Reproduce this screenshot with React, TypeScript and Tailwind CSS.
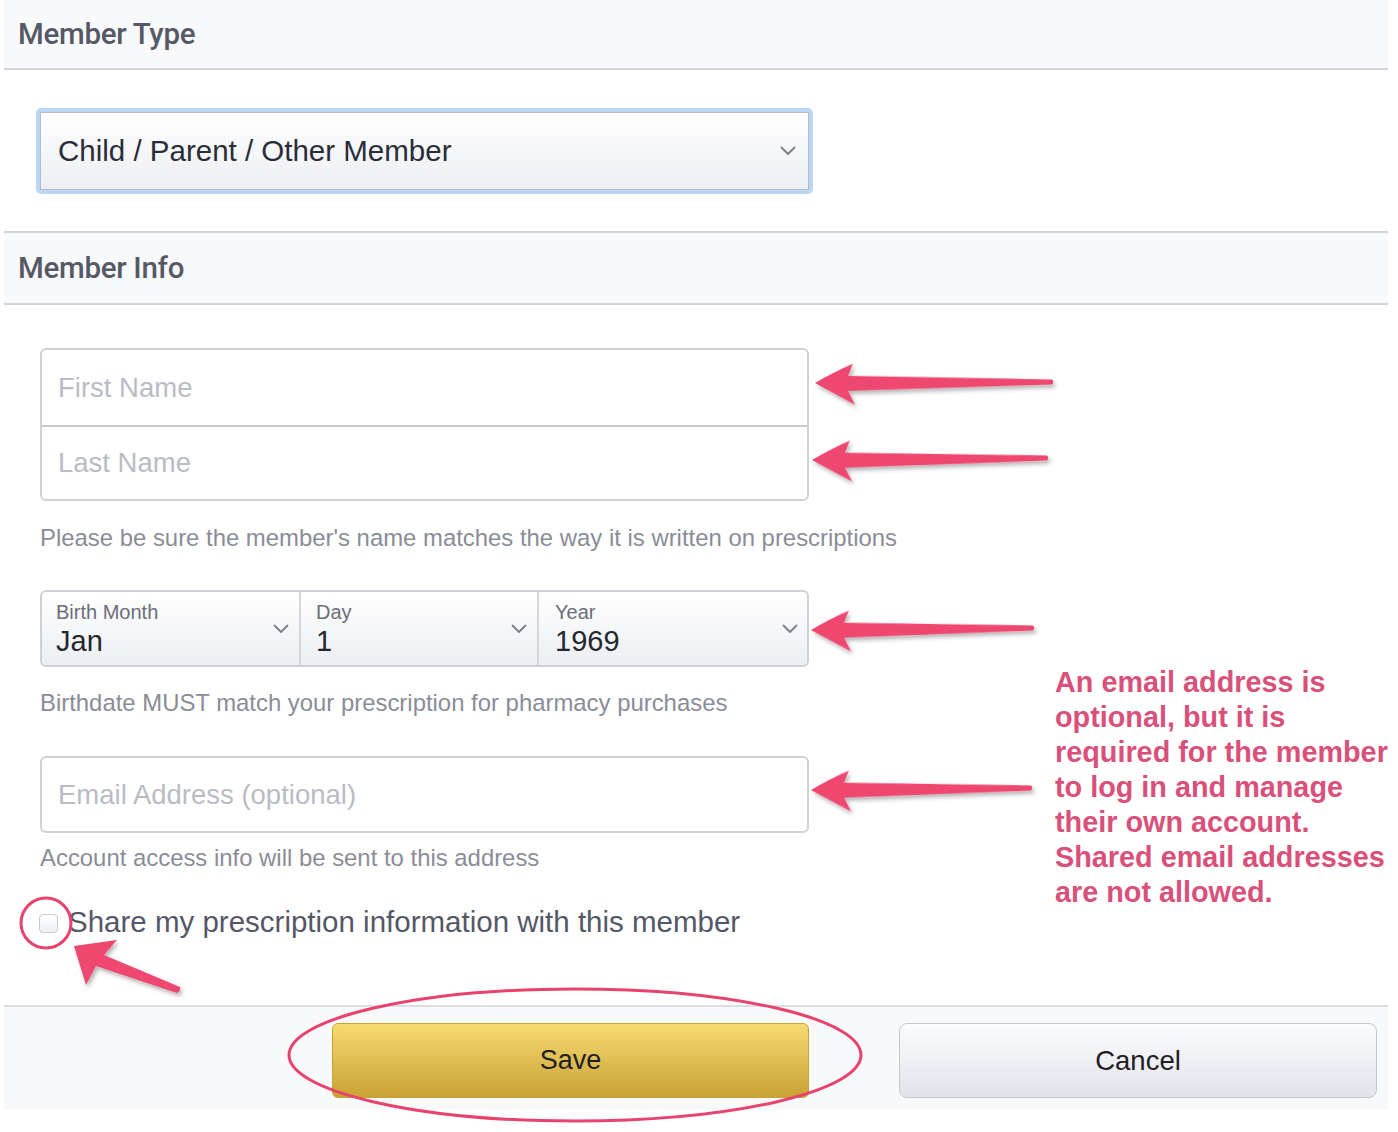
import React from "react";

function Chevron({ className = "" }: { className?: string }) {
  return (
    <svg className={className} width="16" height="10" viewBox="0 0 16 10" fill="none">
      <polyline points="1.5,1.5 8,8 14.5,1.5" stroke="#7a7e89" strokeWidth="1.8" strokeLinecap="round" strokeLinejoin="round" />
    </svg>
  );
}

function Arrow({ tx, ty, ex, ey, s = 1 }: { tx: number; ty: number; ex: number; ey: number; s?: number }) {
  const dx = ex - tx;
  const dy = ey - ty;
  const L = Math.hypot(dx, dy);
  const ang = (Math.atan2(dy, dx) * 180) / Math.PI;
  const d = `M0,0 C${12 * s},${-7 * s} ${26 * s},${-14 * s} ${38 * s},${-19 * s} L${33 * s},${-7 * s} L${L},-2.6 Q${L + 2.6},0 ${L},2.6 L${33 * s},${8 * s} L${40 * s},${22 * s} C${27 * s},${15 * s} ${13 * s},${7 * s} 0,0 Z`;
  return <path d={d} transform={`translate(${tx},${ty}) rotate(${ang})`} fill="#ee4770" filter="url(#ashadow)" />;
}

function HelpText({ children, className = "" }: { children: React.ReactNode; className?: string }) {
  return <div className={`ml-[36px] text-[23.9px] leading-[30px] text-[#8a8d98] ${className}`}>{children}</div>;
}

export default function App() {
  return (
    <div className="relative w-[1398px] h-[1132px] bg-white overflow-hidden font-['Liberation_Sans',Arial,sans-serif]">
      <div className="ml-[4px] w-[1384px]">
        {/* Member Type header */}
        <div className="h-[70px] bg-[#f8f9fb] border-b-2 border-[#d2d4d9] flex items-center pl-[14px]">
          <span className="font-['Roboto',sans-serif] font-medium text-[29.5px] text-[#555965] tracking-[-0.3px]">Member Type</span>
        </div>

        {/* Select */}
        <div className="pt-[38px] pb-[37px] pl-[32px]">
          <div className="w-[777px] rounded-[5px] bg-[#bcd6f6] p-[4px]">
            <div className="h-[78px] border border-[#b8bac1] bg-gradient-to-b from-white to-[#eceef2] flex items-center justify-between pl-[17px] pr-[12px]">
              <span className="text-[29.5px] text-[#2a2d38]">Child / Parent / Other Member</span>
              <Chevron />
            </div>
          </div>
        </div>

        {/* Member Info header */}
        <div className="h-[74px] bg-[#f8f9fb] border-y-2 border-[#d2d4d9] flex items-center pl-[14px]">
          <span className="font-['Roboto',sans-serif] font-medium text-[29.5px] text-[#555965] tracking-[-0.3px]">Member Info</span>
        </div>

        {/* Name inputs */}
        <div className="mt-[43px] ml-[36px] w-[769px] rounded-[6px] border-2 border-[#cfd1d6] bg-white">
          <div className="h-[77px] border-b-2 border-[#c6c8cd] flex items-center pl-[16px]">
            <span className="text-[27.5px] text-[#b9bcc5]">First Name</span>
          </div>
          <div className="h-[72px] flex items-center pl-[16px]">
            <span className="text-[27.5px] text-[#b9bcc5]">Last Name</span>
          </div>
        </div>
        <HelpText className="mt-[22px]">Please be sure the member's name matches the way it is written on prescriptions</HelpText>

        {/* Birthdate */}
        <div className="mt-[37px] ml-[36px] w-[769px] h-[77px] rounded-[6px] border-2 border-[#cfd1d6] bg-gradient-to-b from-white to-[#eceef2] flex">
          <div className="w-[259px] border-r-2 border-[#d4d6db] flex items-center justify-between pl-[14px] pr-[10px]">
            <div className="flex flex-col pt-[2px]">
              <span className="text-[20px] leading-[22px] text-[#6a6e79]">Birth Month</span>
              <span className="text-[29px] leading-[36px] text-[#24272f]">Jan</span>
            </div>
            <Chevron />
          </div>
          <div className="w-[238px] border-r-2 border-[#d4d6db] flex items-center justify-between pl-[15px] pr-[10px]">
            <div className="flex flex-col pt-[2px]">
              <span className="text-[20px] leading-[22px] text-[#6a6e79]">Day</span>
              <span className="text-[29px] leading-[36px] text-[#24272f]">1</span>
            </div>
            <Chevron />
          </div>
          <div className="flex-1 flex items-center justify-between pl-[16px] pr-[9px]">
            <div className="flex flex-col pt-[2px]">
              <span className="text-[20px] leading-[22px] text-[#6a6e79]">Year</span>
              <span className="text-[29px] leading-[36px] text-[#24272f]">1969</span>
            </div>
            <Chevron />
          </div>
        </div>
        <HelpText className="mt-[21px]">Birthdate MUST match your prescription for pharmacy purchases</HelpText>

        {/* Email */}
        <div className="mt-[38px] ml-[36px] w-[769px] h-[77px] rounded-[6px] border-2 border-[#cfd1d6] bg-white flex items-center pl-[16px]">
          <span className="text-[27.5px] text-[#b9bcc5]">Email Address (optional)</span>
        </div>
        <HelpText className="mt-[10px]">Account access info will be sent to this address</HelpText>

        {/* Checkbox */}
        <div className="mt-[31px] ml-[35px] h-[36px] flex items-center">
          <div className="w-[19px] h-[19px] rounded-[4px] border-[1.5px] border-[#c9cbd1] bg-gradient-to-b from-white to-[#eef0f3] mt-[2px]" />
          <span className="ml-[10px] text-[29.5px] text-[#545866]">Share my prescription information with this member</span>
        </div>

        {/* Footer */}
        <div className="mt-[65px] h-[105px] bg-[#f8f9fb] border-t-2 border-[#dcdee2] flex justify-end items-start pt-[16px] pr-[11px] gap-[90px]">
          <button className="w-[477px] h-[75px] rounded-[6px] border border-[#c4a33a] bg-gradient-to-b from-[#f7da72] to-[#c9a232] flex items-center justify-center text-[27px] text-[#1f2024]">
            Save
          </button>
          <button className="w-[478px] h-[75px] rounded-[8px] border-[1.5px] border-[#c5c7ce] bg-gradient-to-b from-[#fbfcfe] to-[#e2e4eb] flex items-center justify-center text-[27.5px] text-[#1f2024]">
            Cancel
          </button>
        </div>
      </div>

      {/* Annotation text */}
      <div className="absolute left-[1055px] top-[665px] whitespace-nowrap font-bold text-[28.8px] leading-[35px] text-[#d9507b]">
        An email address is
        <br />
        optional, but it is
        <br />
        required for the member
        <br />
        to log in and manage
        <br />
        their own account.
        <br />
        Shared email addresses
        <br />
        are not allowed.
      </div>

      {/* Annotation drawings */}
      <svg className="absolute left-0 top-0 pointer-events-none" width="1398" height="1132" viewBox="0 0 1398 1132">
        <defs>
          <filter id="ashadow" x="-20%" y="-50%" width="140%" height="200%">
            <feDropShadow dx="2" dy="3" stdDeviation="2" floodColor="#000" floodOpacity="0.3" />
          </filter>
        </defs>
        <Arrow tx={815} ty={383} ex={1052} ey={382} />
        <Arrow tx={812} ty={460} ex={1047} ey={458} />
        <Arrow tx={811} ty={630} ex={1033} ey={628} />
        <Arrow tx={811} ty={790} ex={1031} ey={788} />
        <path
          d="M74,946 L117,940 L104,955 L180,987 Q181,991 177,993 L96,966 L86,985 Z"
          fill="#ee4770"
          filter="url(#ashadow)"
        />
        <ellipse cx="46" cy="923" rx="25" ry="25" fill="none" stroke="#e8436c" strokeWidth="3" />
        <ellipse cx="575" cy="1055" rx="286" ry="66" fill="none" stroke="#e8436c" strokeWidth="3" />
      </svg>
    </div>
  );
}
